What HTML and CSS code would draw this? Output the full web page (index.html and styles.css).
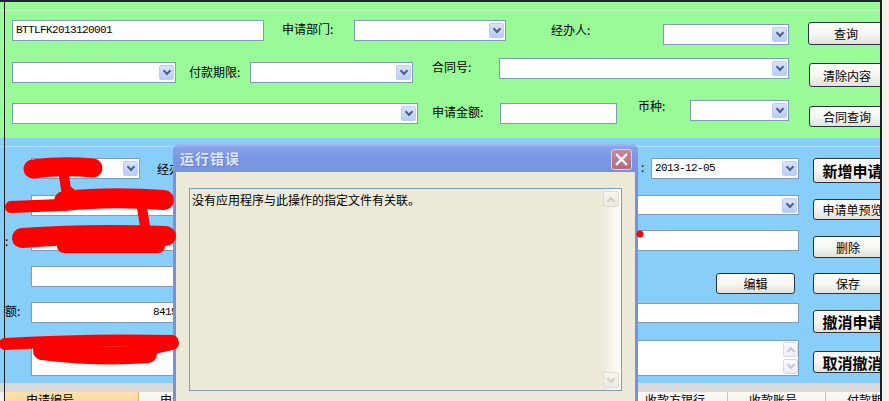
FILE: index.html
```html
<!DOCTYPE html>
<html lang="zh-CN">
<head>
    <meta charset="UTF-8">
    <title>付款申请</title>
    <link rel="stylesheet" href="styles.css">
</head>
<body>

    <div class="window">
        <div class="panel query">
            <div class="group-line"></div>
            <div class="row q1">
                <div class="field mono q-no">BTTLFK2013120001</div>
                <span class="lbl q-dept-l">申请部门:</span>
                <div class="combo q-dept"><span class="drop"></span></div>
                <span class="lbl q-agent-l">经办人:</span>
                <div class="combo q-agent"><span class="drop"></span></div>
                <button class="btn q-find">查询</button>
            </div>
            <div class="row q2">
                <div class="combo q-sel1"><span class="drop"></span></div>
                <span class="lbl q-term-l">付款期限:</span>
                <div class="combo q-term"><span class="drop"></span></div>
                <span class="lbl q-con-l">合同号:</span>
                <div class="combo q-con"><span class="drop"></span></div>
                <button class="btn q-clear">清除内容</button>
            </div>
            <div class="row q3">
                <div class="combo q-sel2"><span class="drop"></span></div>
                <span class="lbl q-amt-l">申请金额:</span>
                <div class="field q-amt"></div>
                <span class="lbl q-cur-l">币种:</span>
                <div class="combo q-cur"><span class="drop"></span></div>
                <button class="btn q-con-find">合同查询</button>
            </div>
        </div>

        <div class="panel detail">
            <div class="group-line"></div>
            <div class="brow b1">
                <span class="lbl side"></span>
                <div class="combo b-type"><span class="drop"></span></div>
                <span class="lbl b-agent-l">经办人:</span>
                <div class="right">
                    <span class="lbl colon-r">:</span>
                    <div class="combo b-date"><span class="mono">2013-12-05</span><span class="drop"></span></div>
                    <button class="btn strong">新增申请</button>
                </div>
            </div>
            <div class="brow b2">
                <span class="lbl side"></span>
                <div class="field b-wide"></div>
                <div class="right">
                    <div class="combo r-wide"><span class="drop"></span></div>
                    <button class="btn">申请单预览</button>
                </div>
            </div>
            <div class="brow b3">
                <span class="lbl side">:</span>
                <div class="field b-wide"></div>
                <div class="right">
                    <div class="field r-wide"></div>
                    <button class="btn shift">删除</button>
                </div>
            </div>
            <div class="brow b4">
                <span class="lbl side"></span>
                <div class="field b-wide"></div>
                <div class="right">
                    <button class="btn edit">编辑</button>
                    <button class="btn shift save">保存</button>
                </div>
            </div>
            <div class="brow b5">
                <span class="lbl side">额:</span>
                <div class="field mono b-amt">84150.00</div>
                <div class="right">
                    <div class="field r-wide"></div>
                    <button class="btn strong">撤消申请</button>
                </div>
            </div>
            <div class="brow b6">
                <span class="lbl side"></span>
                <div class="field b-memo"></div>
                <div class="right">
                    <div class="field r-memo">
                        <div class="vscroll">
                            <span class="sbtn up"></span>
                            <span class="sbtn down"></span>
                        </div>
                    </div>
                    <button class="btn strong">取消撤消</button>
                </div>
            </div>
        </div>

        <div class="strip"></div>
        <div class="thead">
            <div class="th sel">申请编号</div>
            <div class="th w120">申请日期</div>
            <div class="th w120">申请部门</div>
            <div class="th w120">经办人</div>
            <div class="th w125">合同号</div>
            <div class="th w104">收款方银行</div>
            <div class="th w98">收款账号</div>
            <div class="th w120">付款期限</div>
        </div>

        <div class="dialog">
            <div class="dlg-title">
                <h2>运行错误</h2>
                <span class="close">
                    <svg width="13" height="13" viewBox="0 0 13 13"><path d="M2 2L11 11M11 2L2 11" stroke="#fff" stroke-width="2.4" stroke-linecap="square"/></svg>
                </span>
            </div>
            <div class="dlg-body">
                <div class="msg">
                    <p>没有应用程序与此操作的指定文件有关联。</p>
                    <div class="vscroll track">
                        <span class="sbtn up"></span>
                        <span class="sbtn down"></span>
                    </div>
                </div>
            </div>
        </div>

        <!-- redaction marks drawn over the screenshot -->
        <svg class="scribble" width="889" height="401" viewBox="0 0 889 401">
            <g fill="none" stroke="#f00" stroke-linecap="round" stroke-linejoin="round">
                <path d="M33 169 Q62 165 93 168" stroke-width="19"/>
                <path d="M64 176 L66 189 L74 196" stroke-width="10"/>
                <path d="M11 207 L60 205" stroke-width="12"/>
                <path d="M64 201 Q110 196 164 200" stroke-width="20"/>
                <path d="M142 208 L146 232" stroke-width="10"/>
                <path d="M22 238 Q90 233 166 236" stroke-width="20"/>
                <path d="M64 246 L158 246" stroke-width="14"/>
                <path d="M5 344 Q90 339 172 341" stroke-width="12"/>
                <path d="M42 351 Q100 358 148 354" stroke-width="18"/>
                <path d="M150 348 L172 343" stroke-width="14"/>
            </g>
            <circle cx="640" cy="234" r="3.5" fill="#f00"/>
        </svg>
    </div>

</body>
</html>
```

FILE: styles.css
```css
* {
    margin: 0;
    padding: 0;
    box-sizing: border-box;
}

body {
    font-family: "Noto Sans CJK SC", "Liberation Sans", sans-serif;
    font-size: 12px;
    color: #000;
    background-color: #f1f1e9;
}

.window {
    position: relative;
    width: 882px;
    height: 401px;
    border-top: 2px solid #1c2333;
    border-right: 2px solid #1f1f1f;
    overflow: hidden;
}

.window::before {
    content: "";
    position: absolute;
    left: 4px;
    top: 0;
    bottom: 0;
    width: 1px;
    background-color: #202020;
    z-index: 1;
}

.panel {
    padding-top: 8px;
}

.query {
    height: 136px;
    background-color: #98fb98;
}

.detail {
    height: 245px;
    background-color: #87cefa;
}

.group-line {
    border-top: 1px solid #c6f6c6;
    margin-bottom: 9px;
}

.detail .group-line {
    border-top-color: #b0dcfb;
    margin-bottom: 11px;
}

.row,
.brow,
.right {
    display: flex;
    align-items: flex-start;
}

.row > *,
.brow > *,
.right > * {
    flex-shrink: 0;
}

.brow {
    width: 892px;
}

.right {
    margin-left: auto;
}

/* basic controls */
.lbl {
    line-height: 21px;
    white-space: nowrap;
}

.field,
.combo {
    height: 21px;
    background-color: #fff;
    border: 1px solid #7f9db9;
}

.combo {
    display: flex;
    align-items: center;
    padding: 0 1px 0 2px;
}

.drop {
    margin-left: auto;
    width: 15px;
    height: 15px;
    display: flex;
    align-items: center;
    justify-content: center;
    border: 1px solid #b9cdf7;
    border-radius: 2px;
    background: linear-gradient(#d8e4fd, #b8ccf8);
}

.drop::after {
    content: "";
    width: 4px;
    height: 4px;
    border-right: 2px solid #4d6185;
    border-bottom: 2px solid #4d6185;
    transform: rotate(45deg);
    margin-top: -3px;
}

.mono {
    font-family: "Liberation Mono", monospace;
    font-size: 11px;
    letter-spacing: -0.6px;
    line-height: 19px;
}

.field.mono {
    padding-left: 3px;
}

.btn {
    width: 76px;
    height: 23px;
    border: 1px solid #2a3340;
    border-radius: 3px;
    background: linear-gradient(#ffffff, #f5f5f1 55%, #e2e1da);
    font-family: inherit;
    font-size: 12px;
    color: #000;
    display: flex;
    align-items: center;
    justify-content: center;
    white-space: nowrap;
}

.btn.strong {
    font-size: 15px;
    font-weight: bold;
}

.btn.shift {
    padding-right: 9px;
}

/* query panel */
.q1 { height: 38px; }
.q2 { height: 42px; }
.q3 { height: 37px; }

.q-no { margin-left: 12px; width: 252px; }
.q-dept-l { margin-left: 18px; width: 72px; margin-top: -2px; }
.q-dept { width: 152px; }
.q-agent-l { margin-left: 45px; width: 112px; margin-top: -1px; }
.q-agent { width: 126px; margin-top: 4px; }
.q-find { margin-left: 19px; margin-top: 2px; }

.q-sel1 { margin-left: 12px; width: 164px; margin-top: 4px; }
.q-term-l { margin-left: 13px; width: 61px; margin-top: 3px; }
.q-term { width: 163px; margin-top: 4px; }
.q-con-l { margin-left: 19px; width: 67px; margin-top: -2px; }
.q-con { width: 290px; }
.q-clear { margin-left: 20px; margin-top: 5px; height: 24px; }

.q-sel2 { margin-left: 12px; width: 406px; margin-top: 3px; }
.q-amt-l { margin-left: 14px; width: 68px; margin-top: 1px; }
.q-amt { width: 117px; margin-top: 3px; }
.q-cur-l { margin-left: 21px; width: 52px; margin-top: -5px; }
.q-cur { width: 99px; }
.q-con-find { margin-left: 20px; margin-top: 6px; height: 21px; }

/* detail panel */
.b1 { height: 37px; }
.b2 { height: 35px; }
.b3 { height: 36px; }
.b4 { height: 36px; }
.b5 { height: 37px; }
.b6 { height: 44px; }

.side {
    margin-left: 5px;
    width: 26px;
}

.b5 .side {
    margin-top: -2px;
}

.b-type { width: 109px; }
.b-agent-l { margin-left: 17px; }
.b-wide { width: 250px; }
.b-amt {
    width: 174px;
    text-align: right;
    padding-right: 3px;
}
.b-memo { width: 250px; height: 37px; }

.colon-r { width: 10px; margin-top: -2px; }
.b-date { width: 148px; }
.b-date .mono { padding-left: 1px; }
.r-wide { width: 240px; }

.right .btn {
    width: 79px;
    margin-left: 14px;
}

.b1 .btn { height: 25px; }
.b2 .r-wide { height: 20px; }
.b2 .btn { margin-top: 4px; height: 21px; }
.b3 .btn { margin-top: 6px; height: 22px; }
.b4 .btn { margin-top: 7px; height: 21px; }
.b4 .edit { margin-left: 0; }
.b4 .save { margin-left: 18px; }
.b5 .r-wide { height: 20px; margin-top: 1px; }
.b5 .btn { margin-top: 8px; height: 23px; }
.b6 .btn { margin-top: 12px; height: 22px; }

.r-memo {
    width: 240px;
    height: 36px;
    margin-top: 1px;
    display: flex;
}

.vscroll {
    margin-left: auto;
    display: flex;
    flex-direction: column;
    justify-content: space-between;
    padding: 1px 0;
}

.sbtn {
    width: 15px;
    height: 15px;
    border: 1px solid #d3dbe8;
    border-radius: 2px;
    background: linear-gradient(#fbfbfd, #eceef3);
    display: flex;
    align-items: center;
    justify-content: center;
}

.sbtn::after {
    content: "";
    width: 4px;
    height: 4px;
    border-right: 2px solid #c3c9d6;
    border-bottom: 2px solid #c3c9d6;
}

.sbtn.up::after {
    transform: rotate(-135deg);
    margin-top: 3px;
}

.sbtn.down::after {
    transform: rotate(45deg);
    margin-top: -3px;
}

/* grid header */
.strip {
    height: 9px;
    background-color: #d9d9d9;
}

.thead {
    display: flex;
    margin-left: 5px;
    height: 22px;
}

.th {
    flex: none;
    padding: 1px 0 0 21px;
    line-height: 14px;
    white-space: nowrap;
    border-right: 1px solid #c5c5bd;
    background: linear-gradient(#fafaf7, #ecebe5);
}

.th.sel {
    width: 134px;
    background: linear-gradient(#fde0ac, #f7cd86);
    border-right-color: #e0b46c;
}

.w120 { width: 120px; }
.w125 { width: 125px; }
.w104 { width: 104px; }
.w98 { width: 98px; }

/* error dialog */
.dialog {
    position: absolute;
    left: 173px;
    top: 142px;
    width: 465px;
    height: 272px;
    padding: 0 3px;
    border-radius: 7px 7px 0 0;
    background-color: #7592de;
    overflow: hidden;
    z-index: 2;
}

.dlg-title {
    height: 28px;
    margin: 0 -3px;
    padding: 0 6px 0 7px;
    display: flex;
    align-items: center;
    justify-content: space-between;
    background: linear-gradient(#a3b9ef, #85a1e7 14%, #7a97e2 50%, #7593df);
}

.dlg-title h2 {
    font-size: 14px;
    font-weight: bold;
    color: #dfe7fb;
    letter-spacing: 1px;
    text-shadow: 1px 1px 0 #6680cc;
}

.close {
    width: 21px;
    height: 21px;
    margin-top: 2px;
    border: 1px solid #e6ccd6;
    border-radius: 3px;
    background: linear-gradient(#ca8799, #b16a82);
    display: flex;
    align-items: center;
    justify-content: center;
}

.dlg-body {
    height: 244px;
    padding: 16px 13px 0;
    background-color: #ece9d8;
}

.msg {
    height: 203px;
    border: 1px solid #7f9db9;
    display: flex;
}

.msg p {
    flex: 1;
    padding: 3px 2px;
    line-height: 16px;
}

.vscroll.track {
    width: 19px;
    padding: 2px 2px 2px 1px;
    background: linear-gradient(to right, #ece9d8, #ffffff);
}

.track .sbtn {
    width: 16px;
    height: 16px;
    border-color: #dedcd2;
    background: linear-gradient(#f6f5f0, #ebe9e0);
}

.track .sbtn::after {
    border-color: #cfcdc2;
}

.scribble {
    position: absolute;
    left: 0;
    top: -2px;
    z-index: 3;
    pointer-events: none;
}
```
